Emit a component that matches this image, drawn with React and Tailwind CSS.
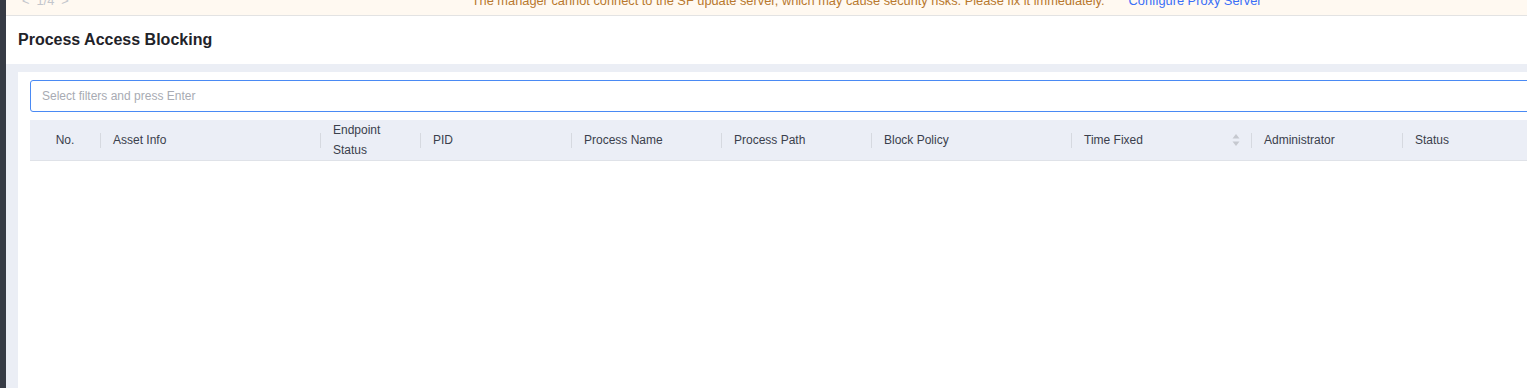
import React from "react";

function SortIcon() {
  return (
    <svg width="8" height="14" viewBox="0 0 8 14" className="shrink-0">
      <path d="M4 1 L7.5 5.5 L0.5 5.5 Z" fill="#c5c8cf" />
      <path d="M4 13 L7.5 8.5 L0.5 8.5 Z" fill="#c5c8cf" />
    </svg>
  );
}

function Divider() {
  return <div className="w-px h-[15px] bg-[#d6d9e0] shrink-0" />;
}

const cols = [
  { label: "No.", w: "w-[70px]", center: true },
  { label: "Asset Info", w: "w-[220px]" },
  { label: "Endpoint Status", w: "w-[100px]", two: true },
  { label: "PID", w: "w-[151px]" },
  { label: "Process Name", w: "w-[150px]" },
  { label: "Process Path", w: "w-[150px]" },
  { label: "Block Policy", w: "w-[200px]" },
  { label: "Time Fixed", w: "w-[180px]", sort: true },
  { label: "Administrator", w: "w-[151px]" },
  { label: "Status", w: "w-[180px]" },
];

export default function App() {
  return (
    <div
      className="w-[1527px] h-[388px] overflow-hidden flex bg-[#ebeef5]"
      style={{ fontFamily: '"Liberation Sans", Arial, sans-serif' }}
    >
      <div className="w-[6px] h-full bg-[#363b45] shrink-0" />
      <div className="flex-1 flex flex-col min-w-0">
        {/* banner */}
        <div className="h-[16px] shrink-0 bg-[#fff9f1] border-b border-[#e3e3e3] overflow-hidden">
          <div className="flex items-start -mt-[9px] leading-[20px] text-[12.8px] whitespace-nowrap">
            <div className="flex items-center ml-[16px] text-[#c3c6cc] gap-[7px]">
              <span>&lt;</span>
              <span>1/4</span>
              <span>&gt;</span>
            </div>
            <span className="ml-[403px] text-[#b8782e]">
              The manager cannot connect to the SF update server, which may cause security risks. Please fix it immediately.
            </span>
            <span className="ml-[24px] text-[#3a6ff7]">Configure Proxy Server</span>
          </div>
        </div>
        {/* header */}
        <div className="h-[48px] shrink-0 bg-white flex items-center pl-[12px]">
          <h1 className="text-[16px] font-bold text-[#1f2329]">Process Access Blocking</h1>
        </div>
        {/* content */}
        <div className="flex-1 pt-[8px] pl-[12px] overflow-hidden">
          <div className="w-[1600px] h-full bg-white pt-[8px] px-[12px]">
            <div className="h-[32px] border border-[#4a8af4] rounded-[3px] flex items-center pl-[11px] text-[12px] text-[#a8abb3]">
              Select filters and press Enter
            </div>
            <div className="mt-[8px] h-[41px] bg-[#ebeef6] border-b border-[#dfe2e8] flex items-center text-[12px] text-[#3a404c]">
              {cols.map((c, i) => (
                <div key={c.label} className={`${c.w} shrink-0 flex items-center h-full`}>
                  {i > 0 && <Divider />}
                  {c.center ? (
                    <div className="flex-1 flex items-center justify-center">
                      <span>{c.label}</span>
                    </div>
                  ) : (
                    <div className="flex-1 flex items-center pl-[12px] pr-[11px]">
                      {c.two ? (
                        <span className="leading-[20px] w-[60px]">Endpoint Status</span>
                      ) : (
                        <span className="flex-1">{c.label}</span>
                      )}
                      {c.sort && <SortIcon />}
                    </div>
                  )}
                </div>
              ))}
            </div>
          </div>
        </div>
      </div>
    </div>
  );
}
